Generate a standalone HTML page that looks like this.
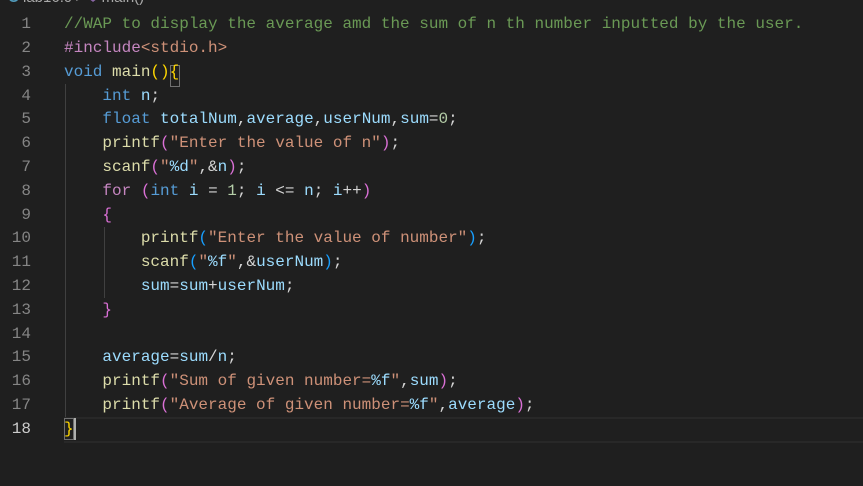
<!DOCTYPE html>
<html><head><meta charset="utf-8"><style>
html,body{margin:0;padding:0;background:#1f1f1f;width:863px;height:486px;overflow:hidden;position:relative}
.bc{position:absolute;left:8px;top:-11px;font:15px "Liberation Sans",sans-serif;color:#a9a9a9;white-space:pre}
.ln{position:absolute;left:0;width:31px;text-align:right;font:16px "Liberation Mono",monospace;color:#858585;height:24px;line-height:24px}
.cd{position:absolute;left:64px;font:16px "Liberation Mono",monospace;color:#d4d4d4;white-space:pre;height:24px;line-height:24px}
.c{color:#6a9955}.k{color:#569cd6}.p{color:#c586c0}.f{color:#dcdcaa}.s{color:#ce9178}.v{color:#9cdcfe}.n{color:#b5cea8}
.y{color:#ffd700}.m{color:#da70d6}.b{color:#179fff}
.guide{position:absolute;width:1px;background:#404040}
</style></head><body>
<div class="bc"><span style="color:#519aba;font-weight:bold">C</span> lab16.c &gt; <span style="color:#b180d7">⌽</span> main()</div>
<div style="position:absolute;left:64px;right:0;top:417px;height:22px;border-top:2px solid #282828;border-bottom:2px solid #282828"></div>
<div class="guide" style="left:65px;top:84px;height:333px"></div>
<div class="guide" style="left:104px;top:227px;height:71px"></div>
<div style="position:absolute;left:64px;top:418px;width:10px;height:22px;border:1px solid #707070;box-sizing:border-box"></div>
<div style="position:absolute;left:74px;top:418px;width:2px;height:22px;background:#aeafad"></div>
<div style="position:absolute;left:170px;top:65px;width:10px;height:22px;border:1px solid #707070;box-sizing:border-box"></div>

<div class="ln" style="top:12px">1</div>
<div class="ln" style="top:36px">2</div>
<div class="ln" style="top:60px">3</div>
<div class="ln" style="top:84px">4</div>
<div class="ln" style="top:107px">5</div>
<div class="ln" style="top:131px">6</div>
<div class="ln" style="top:155px">7</div>
<div class="ln" style="top:179px">8</div>
<div class="ln" style="top:203px">9</div>
<div class="ln" style="top:226px">10</div>
<div class="ln" style="top:250px">11</div>
<div class="ln" style="top:274px">12</div>
<div class="ln" style="top:298px">13</div>
<div class="ln" style="top:322px">14</div>
<div class="ln" style="top:345px">15</div>
<div class="ln" style="top:369px">16</div>
<div class="ln" style="top:393px">17</div>
<div class="ln" style="top:417px;color:#cccccc">18</div>

<div class="cd" style="top:12px"><span class="c">//WAP to display the average amd the sum of n th number inputted by the user.</span></div>
<div class="cd" style="top:36px"><span class="p">#include</span><span class="s">&lt;stdio.h&gt;</span></div>
<div class="cd" style="top:60px"><span class="k">void</span> <span class="f">main</span><span class="y">(){</span></div>
<div class="cd" style="top:84px">    <span class="k">int</span> <span class="v">n</span>;</div>
<div class="cd" style="top:107px">    <span class="k">float</span> <span class="v">totalNum</span>,<span class="v">average</span>,<span class="v">userNum</span>,<span class="v">sum</span>=<span class="n">0</span>;</div>
<div class="cd" style="top:131px">    <span class="f">printf</span><span class="m">(</span><span class="s">"Enter the value of n"</span><span class="m">)</span>;</div>
<div class="cd" style="top:155px">    <span class="f">scanf</span><span class="m">(</span><span class="s">"</span><span class="v">%d</span><span class="s">"</span>,&amp;<span class="v">n</span><span class="m">)</span>;</div>
<div class="cd" style="top:179px">    <span class="p">for</span> <span class="m">(</span><span class="k">int</span> <span class="v">i</span> = <span class="n">1</span>; <span class="v">i</span> &lt;= <span class="v">n</span>; <span class="v">i</span>++<span class="m">)</span></div>
<div class="cd" style="top:203px">    <span class="m">{</span></div>
<div class="cd" style="top:226px">        <span class="f">printf</span><span class="b">(</span><span class="s">"Enter the value of number"</span><span class="b">)</span>;</div>
<div class="cd" style="top:250px">        <span class="f">scanf</span><span class="b">(</span><span class="s">"</span><span class="v">%f</span><span class="s">"</span>,&amp;<span class="v">userNum</span><span class="b">)</span>;</div>
<div class="cd" style="top:274px">        <span class="v">sum</span>=<span class="v">sum</span>+<span class="v">userNum</span>;</div>
<div class="cd" style="top:298px">    <span class="m">}</span></div>
<div class="cd" style="top:345px">    <span class="v">average</span>=<span class="v">sum</span>/<span class="v">n</span>;</div>
<div class="cd" style="top:369px">    <span class="f">printf</span><span class="m">(</span><span class="s">"Sum of given number=</span><span class="v">%f</span><span class="s">"</span>,<span class="v">sum</span><span class="m">)</span>;</div>
<div class="cd" style="top:393px">    <span class="f">printf</span><span class="m">(</span><span class="s">"Average of given number=</span><span class="v">%f</span><span class="s">"</span>,<span class="v">average</span><span class="m">)</span>;</div>
<div class="cd" style="top:417px"><span class="y">}</span></div>
</body></html>
